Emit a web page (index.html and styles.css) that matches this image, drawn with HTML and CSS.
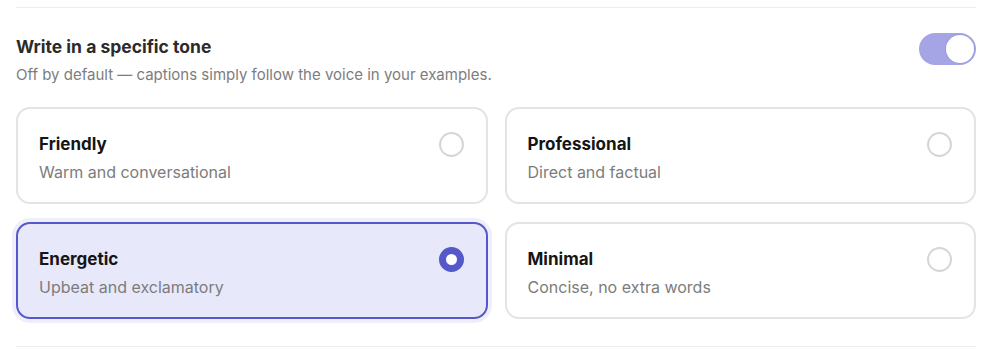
FILE: index.html
```html
<!DOCTYPE html>
<html lang="en">
<head>
<meta charset="utf-8">
<title>Tone</title>
<link rel="stylesheet" href="styles.css">
</head>
<body>
<section class="panel">
  <div class="header">
    <div class="header-text">
      <h2 class="title">Write in a specific tone</h2>
      <p class="subtitle">Off by default — captions simply follow the voice in your examples.</p>
    </div>
    <div class="toggle on"><span class="knob"></span></div>
  </div>
  <div class="grid">
    <div class="card">
      <div class="card-text">
        <div class="card-title">Friendly</div>
        <div class="card-sub">Warm and conversational</div>
      </div>
      <span class="radio"></span>
    </div>
    <div class="card">
      <div class="card-text">
        <div class="card-title">Professional</div>
        <div class="card-sub">Direct and factual</div>
      </div>
      <span class="radio"></span>
    </div>
    <div class="card selected">
      <div class="card-text">
        <div class="card-title">Energetic</div>
        <div class="card-sub">Upbeat and exclamatory</div>
      </div>
      <span class="radio checked"></span>
    </div>
    <div class="card">
      <div class="card-text">
        <div class="card-title">Minimal</div>
        <div class="card-sub">Concise, no extra words</div>
      </div>
      <span class="radio"></span>
    </div>
  </div>
</section>
</body>
</html>
```

FILE: styles.css
```css
* { box-sizing: border-box; }
html, body { margin: 0; padding: 0; background: #ffffff; }
body {
  font-family: "Inter", "Noto Sans", sans-serif;
  color: #2a2a2a;
  width: 1000px;
  height: 350px;
  overflow: hidden;
}
.panel {
  margin: 7px 24px 0 16px;
  border-top: 1px solid #ececee;
  border-bottom: 1px solid #ececee;
  padding: 27px 0 27px 0;
}
.header {
  display: flex;
  justify-content: space-between;
  align-items: flex-start;
}
.title {
  margin: 0;
  font-size: 17.5px;
  line-height: 24px;
  font-weight: 700;
  color: #2b2b2b;
}
.subtitle {
  margin: 6px 0 0;
  font-size: 15px;
  line-height: 20px;
  color: #7d7d7d;
}
.toggle {
  width: 57px;
  height: 32px;
  border-radius: 16px;
  background: #a5a5e6;
  display: flex;
  align-items: center;
  justify-content: flex-end;
  padding: 0 2px;
  margin-top: -2px;
}
.knob {
  width: 28px;
  height: 28px;
  border-radius: 50%;
  background: #ffffff;
  box-shadow: 0 0 0 1px rgba(120, 120, 200, 0.25);
}
.grid {
  margin-top: 22px;
  display: grid;
  grid-template-columns: 1fr 1fr;
  column-gap: 17px;
  row-gap: 18px;
}
.card {
  height: 97px;
  border: 2px solid #e4e4e7;
  border-radius: 14px;
  background: #ffffff;
  padding: 23px 22px 0 21px;
  display: flex;
  justify-content: space-between;
  align-items: flex-start;
}
.card.selected {
  border-color: #5558c9;
  background: #e8e8fb;
  box-shadow: 0 0 0 4px #efeffb;
}
.card-title {
  font-size: 17px;
  line-height: 24px;
  font-weight: 700;
  color: #151515;
}
.card-sub {
  margin-top: 5px;
  font-size: 16px;
  line-height: 22px;
  color: #7c7c7c;
}
.radio {
  width: 25px;
  height: 25px;
  border-radius: 50%;
  border: 2px solid #d6d6da;
  background: #ffffff;
  flex: none;
}
.radio.checked {
  border: 7.5px solid #5558c9;
  background: #ffffff;
}
```
